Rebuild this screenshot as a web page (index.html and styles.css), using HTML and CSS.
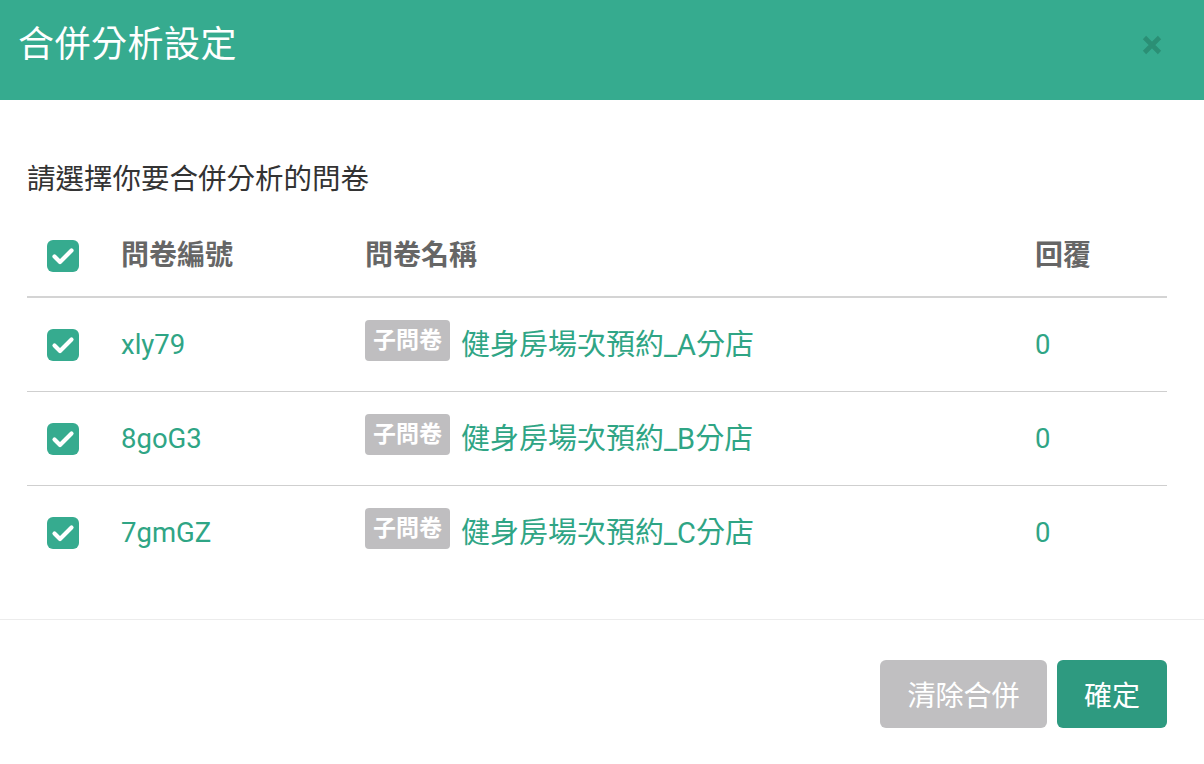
FILE: index.html
```html
<!DOCTYPE html>
<html lang="zh-Hant">
<head>
<meta charset="utf-8">
<title>合併分析設定</title>
<link rel="stylesheet" href="styles.css">
</head>
<body>
<div class="dialog">
  <header class="dlg-header">
    <h1 class="dlg-title">合併分析設定</h1>
    <span class="dlg-close" aria-label="close">
      <svg width="22" height="22" viewBox="0 0 22 22"><path d="M3.5 3.5 L18.5 18.5 M18.5 3.5 L3.5 18.5" stroke="#2b8f75" stroke-width="4.6" stroke-linecap="butt"/></svg>
    </span>
  </header>
  <main class="dlg-body">
    <p class="prompt">請選擇你要合併分析的問卷</p>
    <div class="table">
      <div class="row head">
        <div class="cell cb"><span class="check"><svg viewBox="0 0 32 32" width="32" height="32"><path d="M7.5 16.5 L13 22 L24.5 10.5" fill="none" stroke="#fff" stroke-width="4.2" stroke-linecap="round" stroke-linejoin="round"/></svg></span></div>
        <div class="cell th">問卷編號</div>
        <div class="cell th">問卷名稱</div>
        <div class="cell th">回覆</div>
      </div>
      <div class="row">
        <div class="cell cb"><span class="check"><svg viewBox="0 0 32 32" width="32" height="32"><path d="M7.5 16.5 L13 22 L24.5 10.5" fill="none" stroke="#fff" stroke-width="4.2" stroke-linecap="round" stroke-linejoin="round"/></svg></span></div>
        <div class="cell code">xly79</div>
        <div class="cell name"><span class="tag">子問卷</span><span class="title">健身房場次預約_A分店</span></div>
        <div class="cell num">0</div>
      </div>
      <div class="row">
        <div class="cell cb"><span class="check"><svg viewBox="0 0 32 32" width="32" height="32"><path d="M7.5 16.5 L13 22 L24.5 10.5" fill="none" stroke="#fff" stroke-width="4.2" stroke-linecap="round" stroke-linejoin="round"/></svg></span></div>
        <div class="cell code">8goG3</div>
        <div class="cell name"><span class="tag">子問卷</span><span class="title">健身房場次預約_B分店</span></div>
        <div class="cell num">0</div>
      </div>
      <div class="row last">
        <div class="cell cb"><span class="check"><svg viewBox="0 0 32 32" width="32" height="32"><path d="M7.5 16.5 L13 22 L24.5 10.5" fill="none" stroke="#fff" stroke-width="4.2" stroke-linecap="round" stroke-linejoin="round"/></svg></span></div>
        <div class="cell code">7gmGZ</div>
        <div class="cell name"><span class="tag">子問卷</span><span class="title">健身房場次預約_C分店</span></div>
        <div class="cell num">0</div>
      </div>
    </div>
  </main>
  <footer class="dlg-footer">
    <button class="btn btn-gray">清除合併</button>
    <button class="btn btn-green">確定</button>
  </footer>
</div>
</body>
</html>
```

FILE: styles.css
```css
* { box-sizing: border-box; }
html, body { margin: 0; padding: 0; background: #fff; }
body {
  font-family: Roboto, "Noto Sans CJK TC", "Noto Sans", sans-serif;
  width: 1204px;
  height: 764px;
  overflow: hidden;
}
.dialog { display: flex; flex-direction: column; height: 764px; }

.dlg-header {
  height: 100px;
  background: #36ab8f;
  display: flex;
  align-items: center;
  justify-content: space-between;
  padding: 0 41px 10px 18px;
}
.dlg-title {
  margin: 0;
  font-weight: 400;
  font-size: 36px;
  line-height: 40px;
  color: #fff;
  letter-spacing: 0.5px;
}
.dlg-close { display: flex; width: 22px; height: 22px; }

.dlg-body { padding: 0 37px 40px 27px; border-bottom: 1px solid #ececec; }
.prompt {
  margin: 60px 0 0 0;
  font-size: 28.5px;
  line-height: 40px;
  color: #333;
}

.table { margin-top: 40px; }
.row {
  display: grid;
  grid-template-columns: 94px 244px 1fr 132px;
  align-items: center;
  height: 94px;
  border-bottom: 1px solid #cfcfcf;
}
.row.head { height: 58px; padding-bottom: 25px; border-bottom: 2px solid #d4d4d4; }
.row.last { border-bottom: none; height: 93px; }
.cell { display: flex; align-items: center; }
.cb { padding-left: 20px; }
.check {
  width: 32px;
  height: 32px;
  border-radius: 6px;
  background: #36ab8f;
  display: flex;
}
.th {
  font-size: 28px;
  line-height: 32px;
  font-weight: 700;
  color: #666;
}
.code, .num {
  font-size: 27.5px;
  color: #2fa585;
  line-height: 34px;
}
.name { gap: 11px; }
.tag {
  background: #bfbec0;
  color: #fff;
  font-size: 23px;
  line-height: 41px;
  height: 41px;
  padding: 0 8px;
  border-radius: 4px;
  font-weight: 700;
  margin-bottom: 8px;
}
.title {
  font-size: 29px;
  line-height: 34px;
  color: #2fa585;
}

.dlg-footer {
  display: flex;
  justify-content: flex-end;
  gap: 10px;
  padding: 40px 37px 0 0;
}
.btn {
  font-family: inherit;
  height: 68px;
  border: none;
  border-radius: 6px;
  font-size: 28px;
  color: #fff;
  padding: 0;
}
.btn-gray { width: 167px; background: #c0bfc1; }
.btn-green { width: 110px; background: #2e9a80; }
```
